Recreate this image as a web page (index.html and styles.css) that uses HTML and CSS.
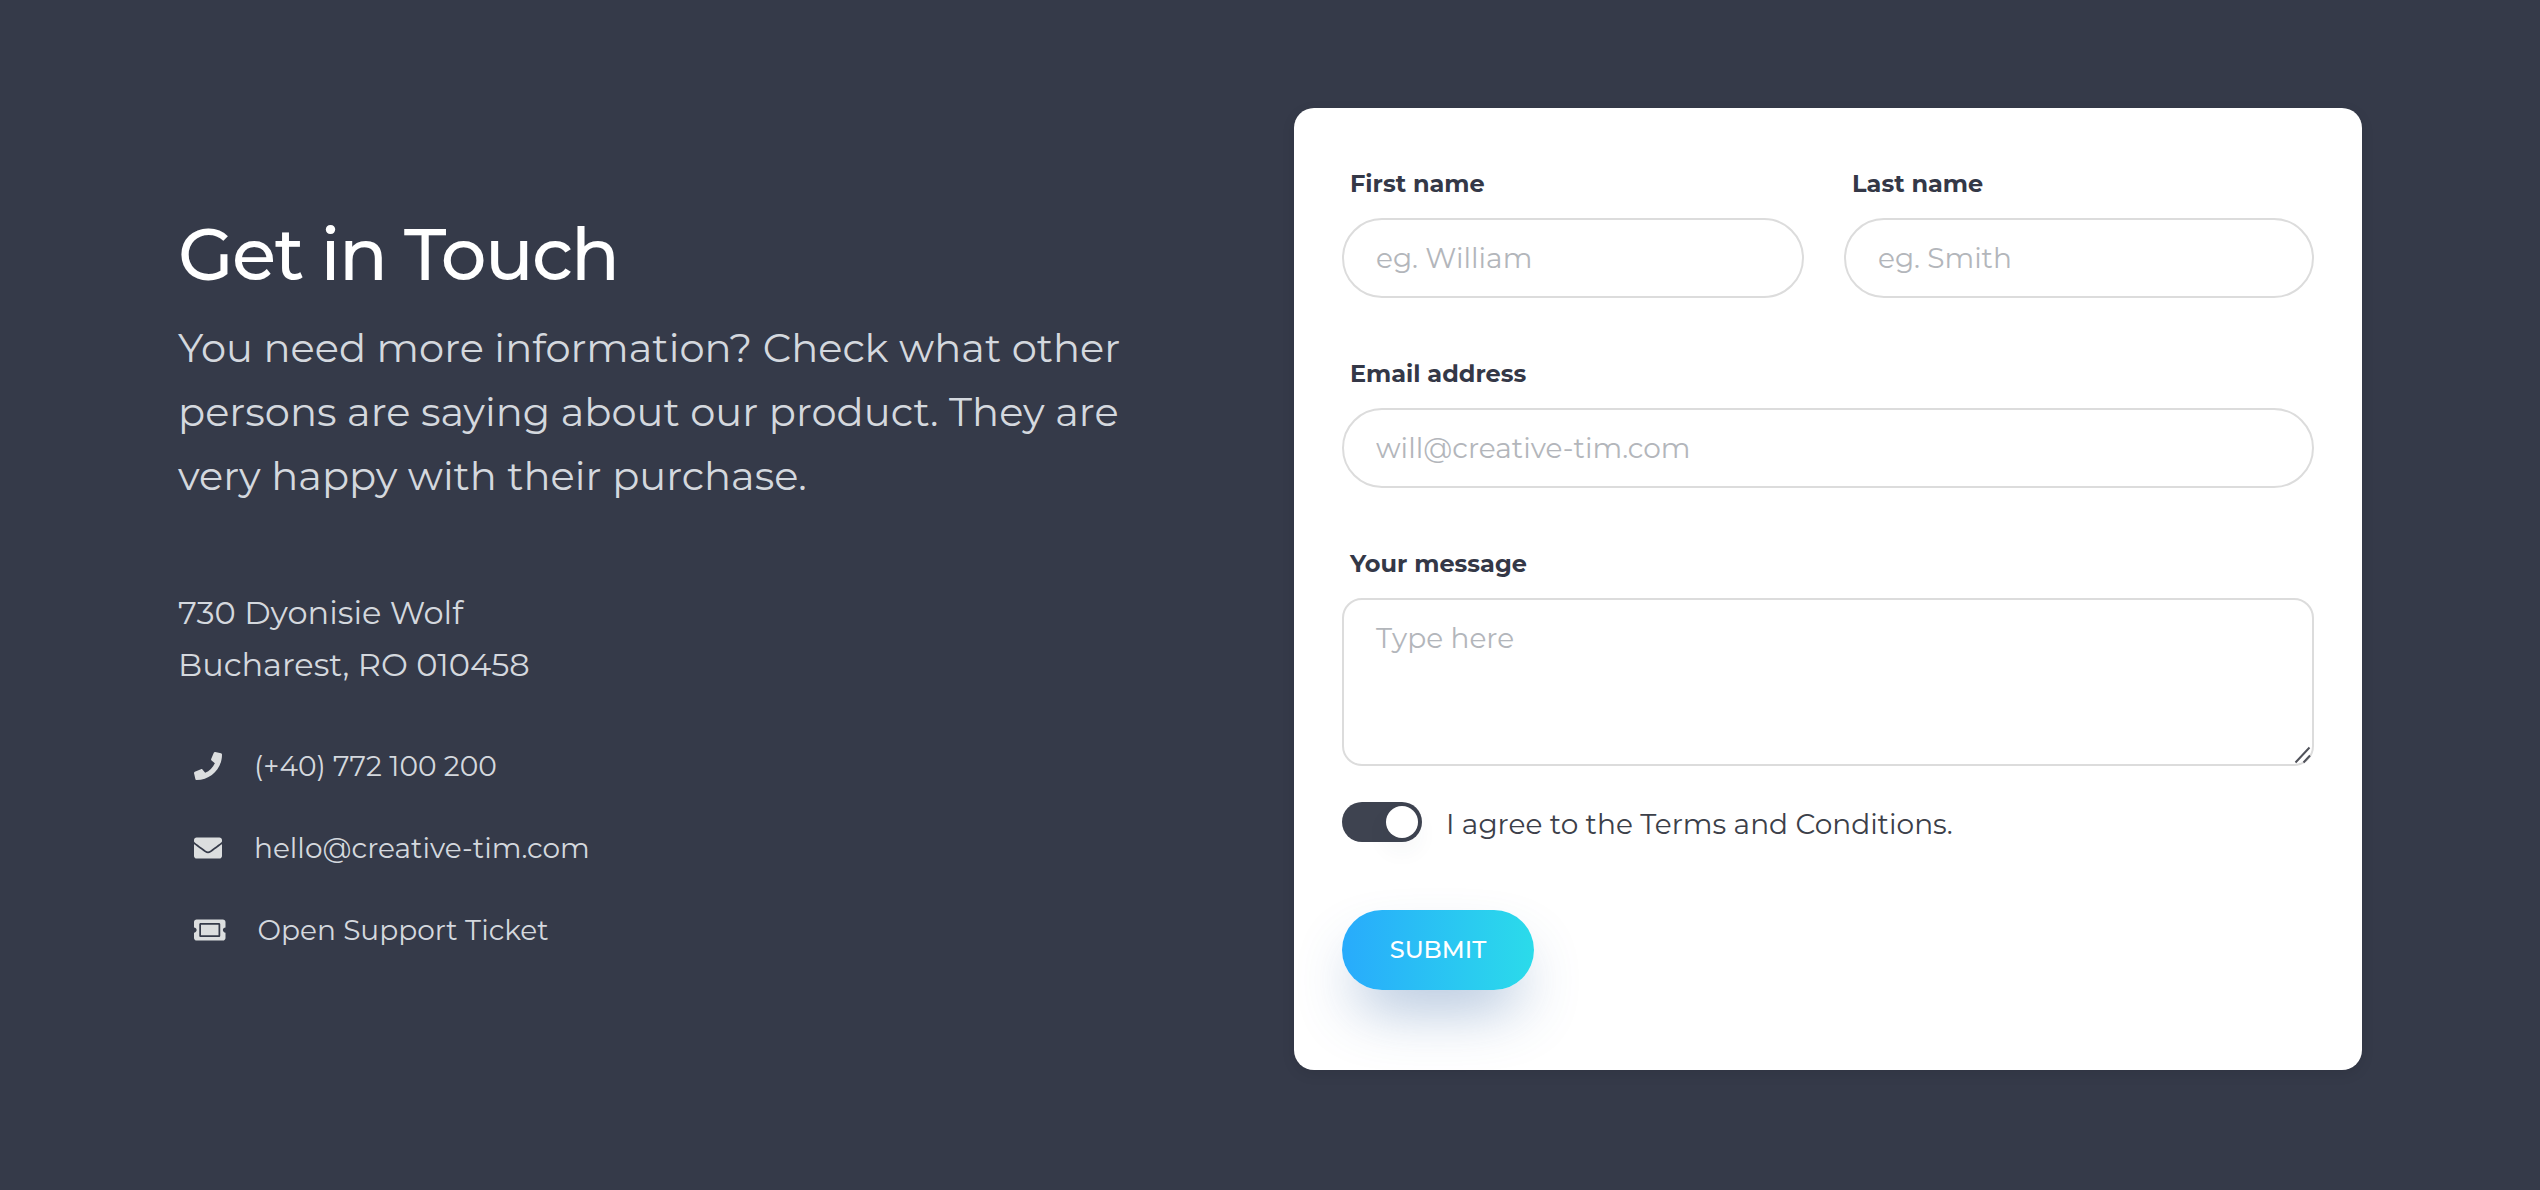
FILE: index.html
```html
<!DOCTYPE html>
<html lang="en">
<head>
<meta charset="utf-8">
<title>Get in Touch</title>
<link rel="stylesheet" href="styles.css">
</head>
<body>
<section class="contact">
  <div class="info">
    <h2 class="title">Get in Touch</h2>
    <p class="lead">You need more information? Check what other<br>persons are saying about our product. They are<br>very happy with their purchase.</p>
    <p class="address">730 Dyonisie Wolf<br>Bucharest, RO 010458</p>
    <ul class="links">
      <li class="link">
        <svg class="icon" viewBox="0 0 512 512"><path d="M493.4 24.600l-104-24c-11.300-2.600-22.900 3.300-27.500 13.900l-48 112c-4.200 9.800-1.400 21.300 6.900 28l60.600 49.600c-36 76.700-98.900 140.500-177.200 177.200l-49.600-60.600c-6.800-8.300-18.200-11.100-28-6.900l-112 48C3.900 366.500-2 378.100.6 389.400l24 104C27.100 504.200 36.700 512 48 512c256.100 0 464-207.500 464-464 0-11.200-7.700-20.900-18.600-23.400z"/></svg>
        <span>(+40) 772 100 200</span>
      </li>
      <li class="link">
        <svg class="icon" viewBox="0 0 512 512"><path d="M502.300 190.800c3.900-3.100 9.700-.2 9.700 4.700V400c0 26.500-21.500 48-48 48H48c-26.500 0-48-21.500-48-48V195.600c0-5 5.700-7.800 9.700-4.700 22.400 17.400 52.100 39.500 154.100 113.600 21.100 15.400 56.700 47.800 92.200 47.600 35.700.3 72-32.800 92.300-47.600 102-74.100 131.600-96.300 154-113.700zM256 320c23.200.4 56.600-29.200 73.400-41.400 132.700-96.300 142.800-104.700 173.400-128.700 5.800-4.500 9.200-11.500 9.200-18.900v-19c0-26.500-21.500-48-48-48H48c-26.500 0-48 21.500-48 48v19c0 7.400 3.400 14.300 9.200 18.900 30.600 23.900 40.700 32.400 173.400 128.700 16.800 12.200 50.200 41.800 73.400 41.400z"/></svg>
        <span>hello@creative-tim.com</span>
      </li>
      <li class="link">
        <svg class="icon icon-wide" viewBox="0 0 576 512"><path d="M128 160h320v192H128V160zm400 96c0 26.500 21.500 48 48 48v96c0 26.500-21.500 48-48 48H48c-26.500 0-48-21.500-48-48v-96c26.500 0 48-21.500 48-48s-21.500-48-48-48v-96c0-26.500 21.500-48 48-48h480c26.500 0 48 21.500 48 48v96c-26.500 0-48 21.500-48 48zm-48-104c0-13.300-10.700-24-24-24H120c-13.300 0-24 10.700-24 24v208c0 13.300 10.700 24 24 24h336c13.300 0 24-10.700 24-24V152z"/></svg>
        <span>Open Support Ticket</span>
      </li>
    </ul>
  </div>
  <form class="card">
    <div class="row">
      <div class="field first">
        <label class="label" for="first">First name</label>
        <input class="input" id="first" type="text" placeholder="eg. William">
      </div>
      <div class="field last">
        <label class="label" for="last">Last name</label>
        <input class="input" id="last" type="text" placeholder="eg. Smith">
      </div>
    </div>
    <div class="field">
      <label class="label" for="email">Email address</label>
      <input class="input" id="email" type="email" placeholder="will@creative-tim.com">
    </div>
    <div class="field">
      <label class="label" for="message">Your message</label>
      <div class="area-wrap">
        <textarea class="input area" id="message" placeholder="Type here"></textarea>
        <svg class="grip" viewBox="0 0 18 18"><path d="M1.500 16.500L15.500 1.500M9.500 16.500L16 9.500"/></svg>
      </div>
    </div>
    <div class="agree">
      <span class="switch"><span class="knob"></span></span>
      <span class="terms">I agree to the Terms and Conditions.</span>
    </div>
    <button class="submit" type="button">SUBMIT</button>
  </form>
</section>
</body>
</html>
```
FILE: styles.css
```css
* { box-sizing: border-box; }
body { margin: 0; background: #353a49; font-family: Montserrat, Inter, sans-serif; font-weight: 400; }
.contact { display: flex; justify-content: space-between; align-items: flex-start; width: 2540px; height: 1190px; padding: 108px 178px 0; }

.info { width: 1000px; padding-top: 104px; color: #d4d8de; white-space: nowrap; }
.title { margin: 0; font-size: 72px; line-height: 84px; font-weight: 500; letter-spacing: -1.6px; color: #fff; }
.lead { margin: 20px 0 0; font-size: 40px; line-height: 64px; letter-spacing: .02px; }
.address { margin: 79px 0 0; font-size: 32px; line-height: 52px; }
.links { list-style: none; margin: 33.5px 0 0; padding: 0 0 0 16px; font-size: 28px; }
.link { display: flex; align-items: center; gap: 32px; height: 82px; }
.icon { width: 28px; height: 28px; fill: #dcdedf; flex: none; }
.icon-wide { width: 31.500px; }

.card { display: flex; flex-direction: column; width: 1068px; height: 962px; padding: 58px 48px 0; background: #fff; border-radius: 20px; box-shadow: 0 4px 14px rgba(0, 0, 0, .09); }
.row { display: flex; gap: 40px; }
.first { width: 462px; }
.last { width: 470px; }
.field { display: flex; flex-direction: column; margin-bottom: 58px; }
.label { height: 36px; margin: 0 0 16px 8px; font-size: 24px; line-height: 36px; font-weight: 700; color: #343847; }
.input { width: 100%; height: 80px; margin: 0; padding: 0 32px; border: 2px solid #dcdcdc; border-radius: 40px; background: #fff; font: inherit; font-size: 28px; color: #3c4150; outline: none; }
.input::placeholder { color: #b3b6bb; opacity: 1; }
.area-wrap { position: relative; height: 168px; }
.area { display: block; height: 168px; padding: 18px 32px; border-radius: 20px; line-height: 40px; resize: none; }
.grip { position: absolute; right: 2px; bottom: 2px; width: 18px; height: 18px; fill: none; stroke: #50525a; stroke-width: 2; }
.agree { display: flex; margin-top: -22px; height: 40px; }
.switch { display: flex; justify-content: flex-end; align-items: center; width: 80px; height: 40px; padding-right: 4px; border-radius: 20px; background: #3e4350; }
.knob { width: 32px; height: 32px; border-radius: 50%; background: #fff; box-shadow: 0 12px 24px rgba(50, 60, 90, .06); }
.terms { margin-left: 24px; padding-top: 2px; font-size: 28px; line-height: 40px; letter-spacing: .03px; color: #3c4049; }
.submit { width: 192px; height: 80px; margin-top: 68px; padding: 0 0 1px; border: 0; border-radius: 40px; background: linear-gradient(90deg, #28abfc, #2bdbea); box-shadow: 0 30px 60px -14px rgba(50, 100, 165, .44); font: inherit; font-size: 24px; font-weight: 500; color: #fff; }
```
